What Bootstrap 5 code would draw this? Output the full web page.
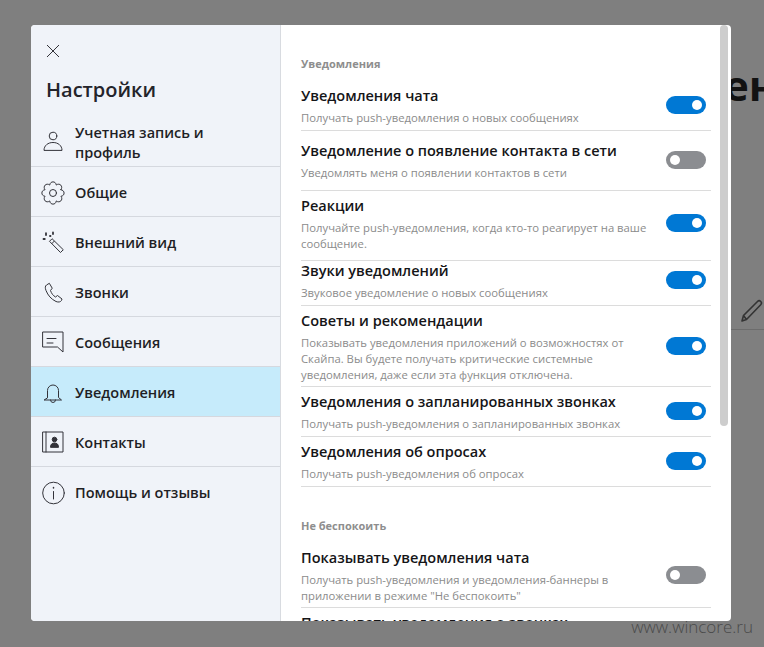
<!doctype html>
<html lang="ru">
<head>
<meta charset="utf-8">
<title>Настройки</title>
<link href="https://cdn.jsdelivr.net/npm/bootstrap@5.3.0/dist/css/bootstrap.min.css" rel="stylesheet">
<style>
html,body{height:647px;overflow:hidden}
body{background:#7f7f7f;font-family:"Open Sans","Noto Sans",sans-serif;color:#222}
.stage{padding:25px 0 0 31px}
.dlg{width:700px;height:596px;background:#fff;border-radius:4px;overflow:hidden;position:relative;flex:none}
.side{width:250px;flex:none;background:#f0f3f9;border-right:1px solid #d8dbe0}
.closer{display:block;padding:0;margin:19px 0 0 15px;border:0;background:none;line-height:0}
.side-title{font-size:20px;font-weight:600;line-height:28px;margin:18px 0 0 15px;color:#24242b}
.side-list{margin-top:15px;border-radius:0;--bs-list-group-bg:transparent;--bs-list-group-border-color:#d5d8df}
.side-item{display:flex;align-items:center;gap:10px;height:50px;padding:2px 10px 0;font-size:14.5px;font-weight:600;line-height:20px;color:#1f1f25}
.side-item svg{flex:none;fill:none;stroke:#33333a;stroke-width:1;stroke-linejoin:round;stroke-linecap:round}
.side-item.first{height:48px;padding-top:1px}
.side-item.first span{max-width:150px}
.side-item.on{background:#c6ebfb}
.side-item.plain{border-bottom:0}
.pane{flex:1;min-width:0;padding:31px 20px 0 20px;height:100%;overflow:hidden}
.sect{font-size:11px;font-weight:700;line-height:16px;color:#8e8e8e;height:16px}
.sect.next{margin-top:31px}
.opt{display:flex;align-items:center;justify-content:space-between;border-bottom:1px solid #dcdcdc;padding:4px 5px 4px 0}
.opt-text{max-width:355px}
.opt-t{font-size:14.5px;font-weight:600;line-height:22px;color:#151517;white-space:nowrap}
.opt-d{font-size:11.3px;line-height:16px;color:#8b8b8b;margin-top:3px}
.r-first{margin-top:9px}
.r-gap{margin-top:9px}
.r-wide{padding-top:9px;padding-bottom:9px}
.r-tall{padding-bottom:8px}
.r-tight{padding-top:0}
.r-tight .opt-text{margin-top:-1px}
.r-snug{padding-bottom:3px}
.sw.form-check-input{width:40px;height:18px;margin:0 0 2px;flex:none;border:0;border-radius:9px;background-color:#8b8d91;background-position:left center;background-size:18px 18px;background-image:url("data:image/svg+xml,%3csvg xmlns='http://www.w3.org/2000/svg' viewBox='-9 -9 18 18'%3e%3ccircle r='5' fill='%23fff'/%3e%3c/svg%3e");float:none;box-shadow:none}
.sw.form-check-input:checked{background-color:#0078d4;background-position:right center;background-image:url("data:image/svg+xml,%3csvg xmlns='http://www.w3.org/2000/svg' viewBox='-9 -9 18 18'%3e%3ccircle r='5' fill='%23fff'/%3e%3c/svg%3e")}
.toggle-wrap{padding:0;margin:0;min-height:0;line-height:0;flex:none}
.thumb{position:absolute;top:0;right:3px;width:8px;height:401px;background:#cdcdcd;border-radius:4px}
.behind{width:33px;height:596px;flex:none;overflow:hidden}
.behind-t{font-size:42px;font-weight:700;line-height:50px;color:#121212;white-space:nowrap;margin:35px 0 0 -7px}
.behind-tool{display:flex;justify-content:flex-end;padding-right:1px;margin-top:189px}
.behind-line{height:1px;background:#6c6c6c;margin-top:6px}
.mark-site{font-size:17px;font-weight:300;line-height:20px;color:#4a4a4a;text-align:right;padding-right:11px;margin-top:-4px;position:relative}
</style>
</head>
<body>
<div class="stage d-flex">
  <div class="dlg d-flex">
    <nav class="side">
      <button class="closer" type="button" aria-label="Закрыть">
        <svg width="14" height="14" viewBox="0 0 14 14"><path d="M1 1l12 12M13 1L1 13" stroke="#33333a" stroke-width="1" fill="none"/></svg>
      </button>
      <div class="side-title">Настройки</div>
      <div class="list-group list-group-flush side-list">
        <div class="list-group-item side-item first">
          <svg width="24" height="24" viewBox="0 0 24 24"><circle cx="12" cy="5" r="3.800"/><path d="M3 19c0-4.500 4-7.500 9-7.500s9 3 9 7.500z"/></svg>
          <span>Учетная запись и профиль</span>
        </div>
        <div class="list-group-item side-item">
          <svg width="24" height="24" viewBox="0 0 24 24"><g transform="translate(12 12)"><path d="M7.950 -3.290C12.180 -2.810 12.180 2.810 7.950 3.290C10.600 6.620 6.620 10.600 3.290 7.950C2.810 12.180 -2.810 12.180 -3.290 7.950C-6.620 10.600 -10.600 6.620 -7.950 3.290C-12.180 2.810 -12.180 -2.810 -7.950 -3.290C-10.600 -6.620 -6.620 -10.600 -3.290 -7.950C-2.810 -12.180 2.810 -12.180 3.290 -7.950C6.620 -10.600 10.600 -6.620 7.950 -3.290Z"/><circle r="3.500"/></g></svg>
          <span>Общие</span>
        </div>
        <div class="list-group-item side-item">
          <svg width="24" height="24" viewBox="0 0 24 24"><path d="M10.800 8L8.500 10.300L19.500 21.500L22 19ZM11 12.500l2.200-2.300"/><path d="M5 2.200v1.800M12 1.500v1.500M2.500 8h1.300M9 5h.5" stroke-width="1.800"/></svg>
          <span>Внешний вид</span>
        </div>
        <div class="list-group-item side-item">
          <svg width="24" height="24" viewBox="0 0 24 24"><path d="M8 2.500L5.500 4C4 5 4 7 5 9.500C7 14.500 10 18 15 20.500C17.500 21.500 19.500 21 20.500 19.500L21 18L16.500 14.500L14.500 16C12 14.500 10.500 12.500 9.500 9.500L11 7.500Z"/></svg>
          <span>Звонки</span>
        </div>
        <div class="list-group-item side-item">
          <svg width="24" height="24" viewBox="0 0 24 24"><path d="M2 1H22V21L16.500 16H2Z"/><path d="M6 7.500H15M6 12H12"/></svg>
          <span>Сообщения</span>
        </div>
        <div class="list-group-item side-item on">
          <svg width="24" height="24" viewBox="0 0 24 24"><path d="M6.500 16.500V9.500a5.500 5.500 0 0 1 11 0v7l3 2.500H3.500Z"/><path d="M9.500 19a2.500 2.500 0 0 0 5 0"/></svg>
          <span>Уведомления</span>
        </div>
        <div class="list-group-item side-item">
          <svg width="24" height="24" viewBox="0 0 24 24"><path d="M2 1H22V21H2ZM5 1V21"/><circle cx="13.500" cy="8.500" r="2.300" fill="#33333a"/><path d="M9.500 16c0-3 1.800-4 4-4s4 1 4 4z" fill="#33333a"/></svg>
          <span>Контакты</span>
        </div>
        <div class="list-group-item side-item plain">
          <svg width="24" height="24" viewBox="0 0 24 24"><circle cx="12.500" cy="12" r="10.800"/><path d="M12.500 10.500V18"/><path d="M12.500 6.500v.5" stroke-width="1.500"/></svg>
          <span>Помощь и отзывы</span>
        </div>
      </div>
    </nav>
    <main class="pane">
      <div class="sect">Уведомления</div>
      <div class="opt r-first">
        <div class="opt-text"><div class="opt-t">Уведомления чата</div><div class="opt-d">Получать push-уведомления о новых сообщениях</div></div>
        <div class="form-check form-switch toggle-wrap"><input class="form-check-input sw" type="checkbox" role="switch" checked aria-label="Уведомления чата"></div>
      </div>
      <div class="opt r-wide">
        <div class="opt-text"><div class="opt-t">Уведомление о появление контакта в сети</div><div class="opt-d">Уведомлять меня о появлении контактов в сети</div></div>
        <div class="form-check form-switch toggle-wrap"><input class="form-check-input sw" type="checkbox" role="switch" aria-label="Контакт в сети"></div>
      </div>
      <div class="opt r-tall">
        <div class="opt-text"><div class="opt-t">Реакции</div><div class="opt-d">Получайте push-уведомления, когда кто-то реагирует на ваше сообщение.</div></div>
        <div class="form-check form-switch toggle-wrap"><input class="form-check-input sw" type="checkbox" role="switch" checked aria-label="Реакции"></div>
      </div>
      <div class="opt r-tight">
        <div class="opt-text"><div class="opt-t">Звуки уведомлений</div><div class="opt-d">Звуковое уведомление о новых сообщениях</div></div>
        <div class="form-check form-switch toggle-wrap"><input class="form-check-input sw" type="checkbox" role="switch" checked aria-label="Звуки уведомлений"></div>
      </div>
      <div class="opt r-snug">
        <div class="opt-text"><div class="opt-t">Советы и рекомендации</div><div class="opt-d">Показывать уведомления приложений о возможностях от Скайпа. Вы будете получать критические системные уведомления, даже если эта функция отключена.</div></div>
        <div class="form-check form-switch toggle-wrap"><input class="form-check-input sw" type="checkbox" role="switch" checked aria-label="Советы и рекомендации"></div>
      </div>
      <div class="opt">
        <div class="opt-text"><div class="opt-t">Уведомления о запланированных звонках</div><div class="opt-d">Получать push-уведомления о запланированных звонках</div></div>
        <div class="form-check form-switch toggle-wrap"><input class="form-check-input sw" type="checkbox" role="switch" checked aria-label="Запланированные звонки"></div>
      </div>
      <div class="opt">
        <div class="opt-text"><div class="opt-t">Уведомления об опросах</div><div class="opt-d">Получать push-уведомления об опросах</div></div>
        <div class="form-check form-switch toggle-wrap"><input class="form-check-input sw" type="checkbox" role="switch" checked aria-label="Уведомления об опросах"></div>
      </div>
      <div class="sect next">Не беспокоить</div>
      <div class="opt r-gap r-snug">
        <div class="opt-text"><div class="opt-t">Показывать уведомления чата</div><div class="opt-d">Получать push-уведомления и уведомления-баннеры в приложении в режиме "Не беспокоить"</div></div>
        <div class="form-check form-switch toggle-wrap"><input class="form-check-input sw" type="checkbox" role="switch" aria-label="Показывать уведомления чата"></div>
      </div>
      <div class="opt">
        <div class="opt-text"><div class="opt-t">Показывать уведомления о звонках</div><div class="opt-d">Получать уведомления о звонках</div></div>
        <div class="form-check form-switch toggle-wrap"><input class="form-check-input sw" type="checkbox" role="switch" aria-label="Показывать уведомления о звонках"></div>
      </div>
    </main>
    <div class="thumb"></div>
  </div>
  <div class="behind">
    <div class="behind-t">ен</div>
    <div class="behind-tool">
      <svg width="24" height="24" viewBox="0 0 24 24" fill="none" stroke="#333" stroke-width="1.600" stroke-linejoin="round"><path d="M3 22L4.500 16.500L18.500 2.500a2.200 2.200 0 0 1 3.200 3.200L7.500 20.500ZM4.500 16.500L7.500 20.500"/></svg>
    </div>
    <div class="behind-line"></div>
  </div>
</div>
<div class="mark-site">www.wincore.ru</div>
<script src="https://cdn.jsdelivr.net/npm/bootstrap@5.3.0/dist/js/bootstrap.bundle.min.js"></script>
</body>
</html>
